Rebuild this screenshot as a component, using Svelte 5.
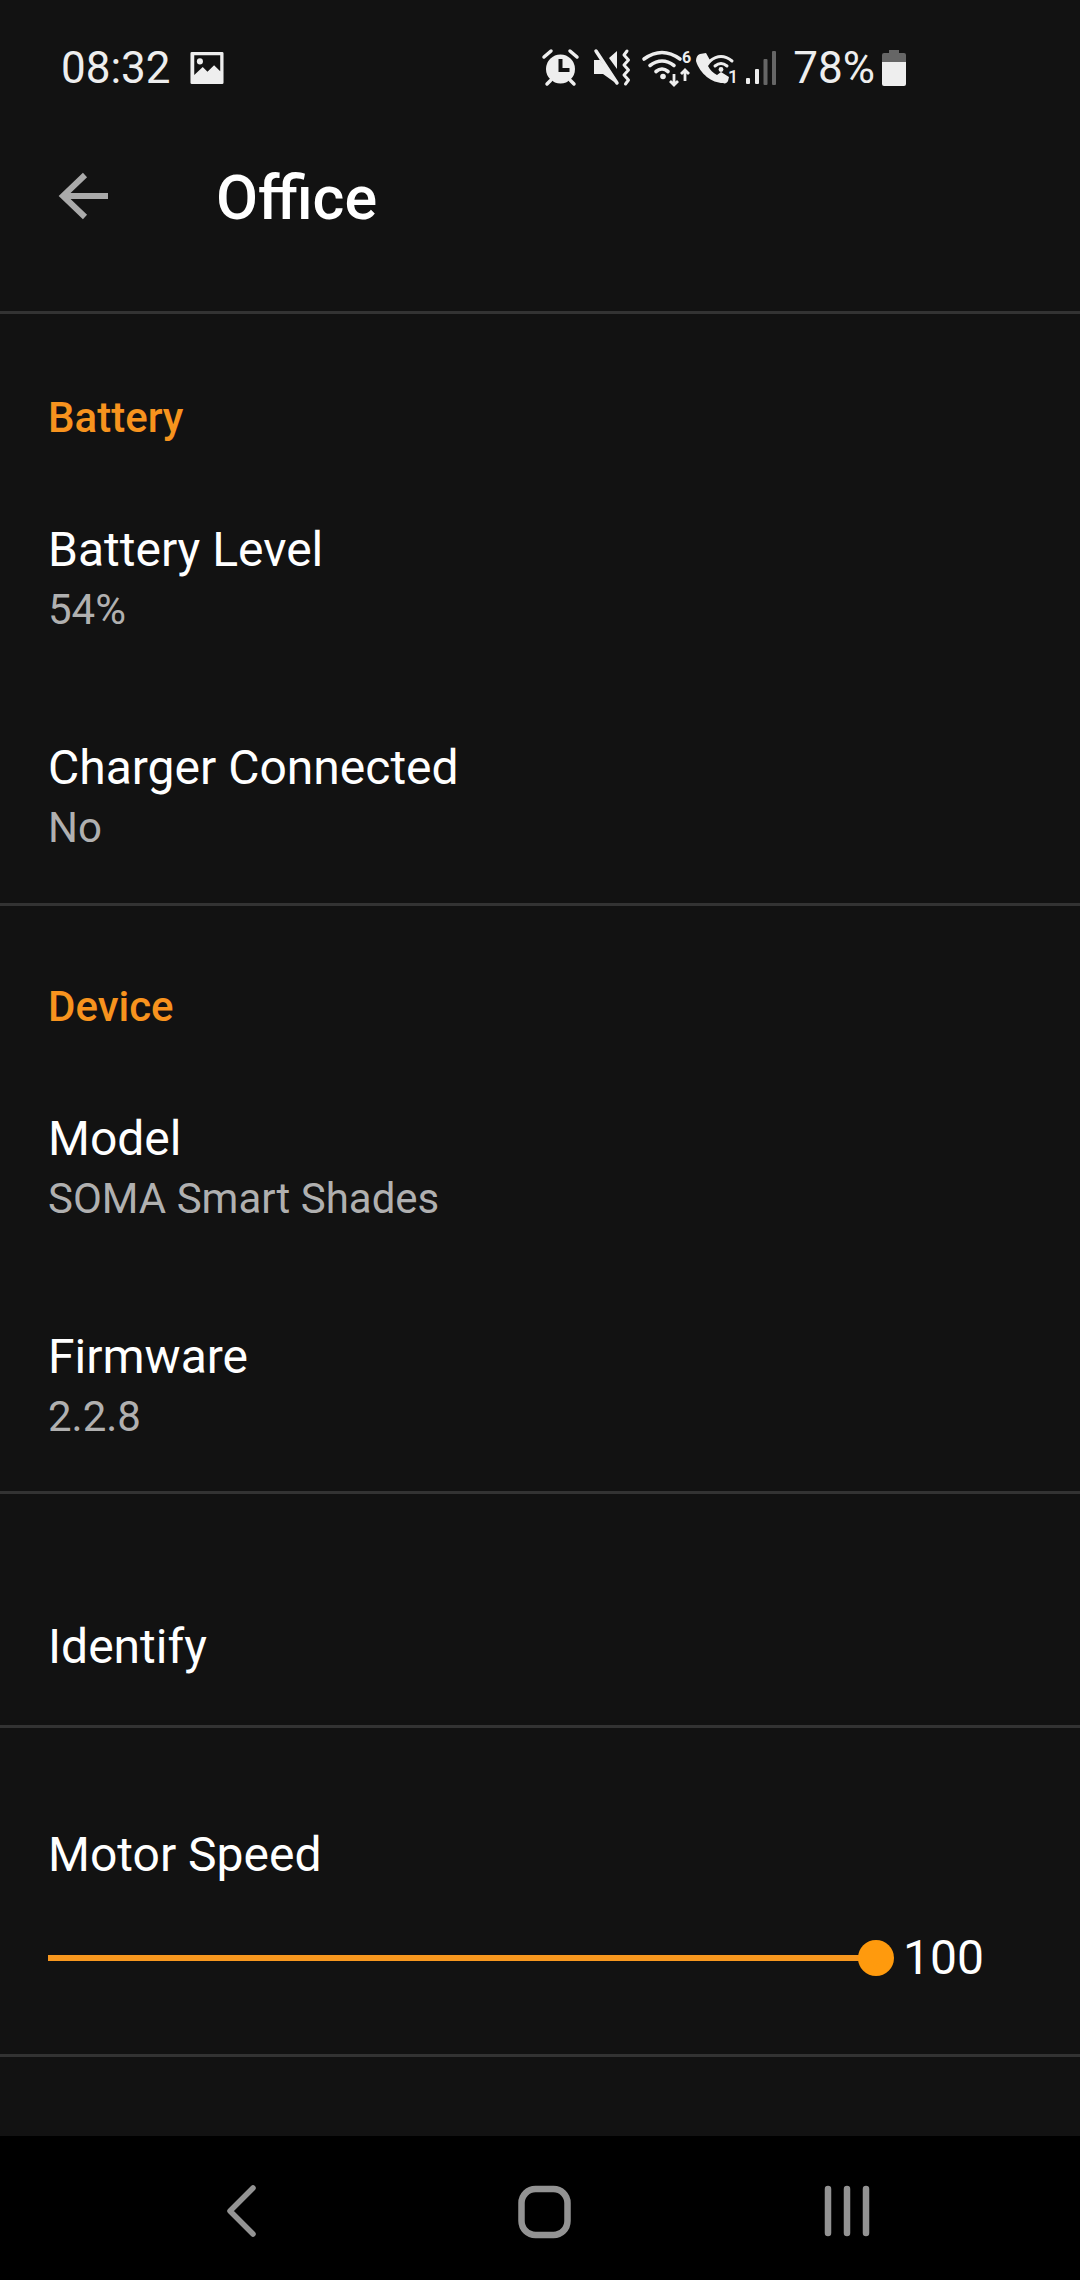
<script>
  const sections = [
    {
      title: "Battery",
      rows: [
        { label: "Battery Level", value: "54%" },
        { label: "Charger Connected", value: "No" },
      ],
    },
    {
      title: "Device",
      rows: [
        { label: "Model", value: "SOMA Smart Shades" },
        { label: "Firmware", value: "2.2.8" },
      ],
    },
  ];

  let speed = 100;
</script>

<div class="screen">
  <div class="status">
    <div class="status-left">
      <span class="clock">08:32</span>
      <svg class="pic" width="34" height="34" viewBox="0 0 36 36">
        <path fill="#eee" fill-rule="evenodd" d="M2 1h32a1.500 1.500 0 0 1 1.500 1.500v31a1.500 1.500 0 0 1-1.500 1.500H2a1.500 1.500 0 0 1-1.500-1.500v-31A1.500 1.500 0 0 1 2 1zm2.500 3.500v21l9-8.500 5 5 7-7 6.500 6.500V4.500z" />
        <circle cx="10.500" cy="11" r="3.200" fill="#eee" />
      </svg>
    </div>
    <div class="status-right">
      <svg width="40" height="38" viewBox="0 0 40 38">
        <circle cx="19.500" cy="20" r="14.500" fill="#eee" />
        <path d="M3 8l7-6M36 8l-7-6M6 35l3.500-3.500M33 35l-3.500-3.500" stroke="#eee" stroke-width="3.500" stroke-linecap="round" fill="none" />
        <path d="M19.500 10v11h9" stroke="#121212" stroke-width="4" fill="none" />
      </svg>
      <svg class="gap-mute" width="38" height="38" viewBox="0 0 38 38">
        <path fill="#eee" d="M16 9l8-7v18zM1 11h6l17 22v2L10 25H1z" />
        <path d="M3 2l21 32" stroke="#eee" stroke-width="3.500" stroke-linecap="round" fill="none" />
        <path d="M34 2l-3 4 4.500 5-4.500 5 4.500 5-4.500 5 4.500 5-3 4" stroke="#eee" stroke-width="3" stroke-linecap="round" stroke-linejoin="round" fill="none" />
      </svg>
      <svg class="gap-wifi" width="50" height="38" viewBox="0 0 50 38">
        <path d="M2 10Q20-3 38 10M8 16.500q12-9 24 0M14 22.500q6-5 12 0" stroke="#eee" stroke-width="3.600" stroke-linecap="round" fill="none" />
        <circle cx="21" cy="27.500" r="2.800" fill="#eee" />
        <text x="40" y="14" class="tiny">6</text>
        <path d="M32 25v11M28 32l4 4 4-4M43 32V21M39 25l4-4 4 4" stroke="#eee" stroke-width="2.800" fill="none" />
      </svg>
      <svg class="gap-call" width="44" height="38" viewBox="0 0 44 38">
        <path fill="#eee" d="M6 5l6-1 5 9-3 4c2 4 5 7 9 9l4-3 8 5-1 4c-1 2-3 3-5 2C18 34 6 25 2 12c0-3 1-6 4-7z" />
        <path d="M16 12Q27 3 38 12M21 17q6-5 12 0" stroke="#eee" stroke-width="3" stroke-linecap="round" fill="none" />
        <circle cx="27" cy="20.500" r="2.400" fill="#eee" />
        <text x="34" y="34" class="tiny1">1</text>
      </svg>
      <svg class="gap-signal" width="34" height="38" viewBox="0 0 34 38">
        <rect x="2" y="29" width="4" height="6" rx="1" fill="#eee" />
        <rect x="11" y="20" width="4" height="15" rx="1" fill="#eee" />
        <rect x="19.500" y="10" width="4" height="26" rx="1" fill="#666" />
        <rect x="28" y="2" width="4" height="34" rx="1" fill="#666" />
      </svg>
      <span class="pct">78%</span>
      <svg class="gap-batt" width="24" height="36" viewBox="0 0 24 36">
        <path fill="#666" d="M7 0h10v3h5a2 2 0 0 1 2 2v7H0V5a2 2 0 0 1 2-2h5z" />
        <path fill="#eee" d="M0 12h24v22a2 2 0 0 1-2 2H2a2 2 0 0 1-2-2z" />
      </svg>
    </div>
  </div>

  <div class="appbar">
    <svg class="back" width="50" height="48" viewBox="0 0 50 48">
      <path d="M49 24H5M26 3L4 24l22 21" stroke="#aaa" stroke-width="6" fill="none" />
    </svg>
    <h1>Office</h1>
  </div>

  <div class="content">
    {#each sections as section}
      <section class="group">
        <h2>{section.title}</h2>
        {#each section.rows as row}
          <div class="row">
            <div class="label">{row.label}</div>
            <div class="value">{row.value}</div>
          </div>
        {/each}
      </section>
    {/each}

    <div class="identify">Identify</div>

    <div class="motor">
      <div class="label">Motor Speed</div>
      <div class="slider">
        <div class="track"><span class="thumb"></span></div>
        <span class="speed">{speed}</span>
      </div>
    </div>
  </div>

  <div class="navbar">
    <svg width="30" height="50" viewBox="0 0 30 50">
      <path d="M27 2L4 25l23 23" stroke="#939393" stroke-width="5.500" stroke-linecap="round" stroke-linejoin="round" fill="none" />
    </svg>
    <svg class="nav-home" width="54" height="52" viewBox="0 0 54 52">
      <rect x="3.500" y="3" width="46" height="46" rx="14" stroke="#939393" stroke-width="6.500" fill="none" />
    </svg>
    <svg class="nav-recents" width="48" height="50" viewBox="0 0 48 50">
      <path d="M4 3v44M23 3v44M42 3v44" stroke="#939393" stroke-width="6.500" stroke-linecap="round" fill="none" />
    </svg>
  </div>
</div>

<style>
  :global(body) {
    background: #121212;
  }

  .screen {
    width: 1080px;
    height: 2280px;
    display: flex;
    flex-direction: column;
    overflow: hidden;
    background: #121212;
    color: #fff;
    font-family: Roboto, "Liberation Sans", sans-serif;
  }

  .status {
    height: 136px;
    flex: none;
    display: flex;
    justify-content: space-between;
    align-items: center;
    padding: 0 174px 0 61px;
    box-sizing: border-box;
  }

  .status-left,
  .status-right {
    display: flex;
    align-items: center;
  }

  .clock,
  .pct {
    color: #eee;
    line-height: 50px;
    font-size: 44px;
  }

  .pic {
    margin-left: 19px;
  }

  .gap-mute {
    margin-left: 12px;
  }

  .gap-wifi {
    margin-left: 11px;
  }

  .gap-call {
    margin-left: 2px;
  }

  .gap-signal {
    margin-left: 6px;
  }

  .pct {
    margin-left: 15px;
  }

  .gap-batt {
    margin-left: 7px;
  }

  svg {
    overflow: visible;
  }

  .tiny {
    font-size: 16px;
    font-weight: 700;
    fill: #eee;
  }

  .tiny1 {
    font-size: 18px;
    font-weight: 500;
    fill: #eee;
  }

  .appbar {
    height: 178px;
    flex: none;
    box-sizing: border-box;
    display: flex;
    align-items: flex-start;
    padding-left: 59px;
    border-bottom: 3px solid #333;
  }

  .back {
    margin-top: 36px;
  }

  h1 {
    margin: 29px 0 0 107px;
    font-size: 61px;
    line-height: 66px;
    font-weight: 500;
  }

  .content {
    flex: 1;
    overflow: hidden;
  }

  .group {
    box-sizing: border-box;
    border-bottom: 3px solid #333;
    padding: 76px 48px 0;
  }

  .group:first-child {
    padding-top: 79px;
  }

  h2 {
    margin: 0 0 79px;
    font-size: 42px;
    line-height: 50px;
    font-weight: 500;
    color: #f7931e;
  }

  .row {
    height: 218px;
  }

  .row:last-child {
    height: 163px;
  }

  .group:not(:first-child) .row:last-child {
    height: 162px;
  }

  .label {
    font-size: 48px;
    line-height: 56px;
  }

  .value {
    margin-top: 8px;
    font-size: 42px;
    line-height: 48px;
    color: #b0b0b0;
  }

  .identify {
    height: 234px;
    box-sizing: border-box;
    padding: 125px 48px 0;
    font-size: 48px;
    line-height: 56px;
    border-bottom: 3px solid #333;
  }

  .motor {
    height: 329px;
    box-sizing: border-box;
    padding: 99px 48px 0;
    border-bottom: 3px solid #333;
  }

  .slider {
    margin-top: 47px;
    display: flex;
    align-items: center;
  }

  .track {
    position: relative;
    width: 828px;
    height: 6px;
    background: #f7971e;
  }

  .thumb {
    position: absolute;
    right: -18px;
    top: -15px;
    width: 36px;
    height: 36px;
    border-radius: 50%;
    background: #ff9a0d;
  }

  .speed {
    margin-left: 27px;
    font-size: 48px;
    line-height: 56px;
  }

  .navbar {
    height: 144px;
    flex: none;
    background: #000;
    box-sizing: border-box;
    display: flex;
    align-items: flex-start;
    padding: 50px 0 0 226px;
  }

  .nav-home {
    margin-left: 262px;
  }

  .nav-recents {
    margin-left: 252px;
  }
</style>
